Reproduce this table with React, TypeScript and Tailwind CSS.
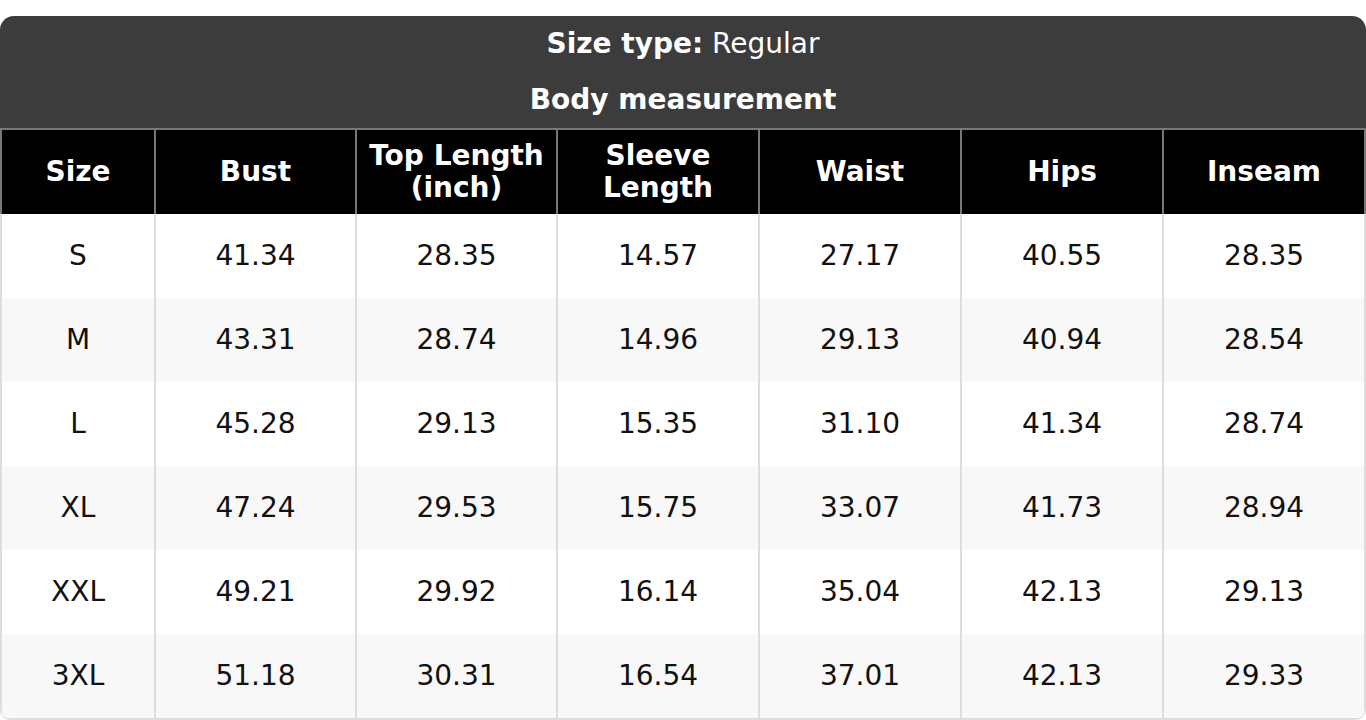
import React from "react";

const headers = ["Size", "Bust", "Top Length (inch)", "Sleeve Length", "Waist", "Hips", "Inseam"];
const rows = [
  ["S", "41.34", "28.35", "14.57", "27.17", "40.55", "28.35"],
  ["M", "43.31", "28.74", "14.96", "29.13", "40.94", "28.54"],
  ["L", "45.28", "29.13", "15.35", "31.10", "41.34", "28.74"],
  ["XL", "47.24", "29.53", "15.75", "33.07", "41.73", "28.94"],
  ["XXL", "49.21", "29.92", "16.14", "35.04", "42.13", "29.13"],
  ["3XL", "51.18", "30.31", "16.54", "37.01", "42.13", "29.33"],
];

export default function App() {
  return (
    <div
      className="bg-white w-[1366px] h-[720px] pt-4"
      style={{ fontFamily: '"DejaVu Sans", Verdana, sans-serif' }}
    >
      <div className="w-[1366px] rounded-t-[14px] rounded-b-[10px] overflow-hidden border-b-2 border-[#dddddd]">
        <div className="bg-[#3c3c3c] text-white text-[28px] text-center">
          <div className="h-14 flex items-center justify-center leading-none">
            <span className="font-bold">Size type:</span>
            <span>&nbsp;Regular</span>
          </div>
          <div className="h-14 flex items-center justify-center font-bold leading-none">
            Body measurement
          </div>
        </div>
        <div className="grid grid-cols-[156px_201px_201px_202px_202px_202px_202px] bg-black border-t-2 border-[#777777]">
          {headers.map((h, i) => (
            <div
              key={h}
              className={`h-[84px] flex items-center justify-center text-center text-white font-bold text-[28px] leading-[32px] px-1 border-r-2 border-[#777777] ${i === 0 ? "border-l-2" : ""}`}
            >
              {h}
            </div>
          ))}
        </div>
        {rows.map((r, ri) => (
          <div
            key={ri}
            className={`grid grid-cols-[156px_201px_201px_202px_202px_202px_202px] ${ri % 2 === 1 ? "bg-[#f8f8f8]" : "bg-white"}`}
          >
            {r.map((c, ci) => (
              <div
                key={ci}
                className={`h-[84px] flex items-center justify-center text-[28px] text-[#111111] border-r-2 border-[#dddddd] ${ci === 0 ? "border-l-2" : ""}`}
              >
                {c}
              </div>
            ))}
          </div>
        ))}
      </div>
    </div>
  );
}
